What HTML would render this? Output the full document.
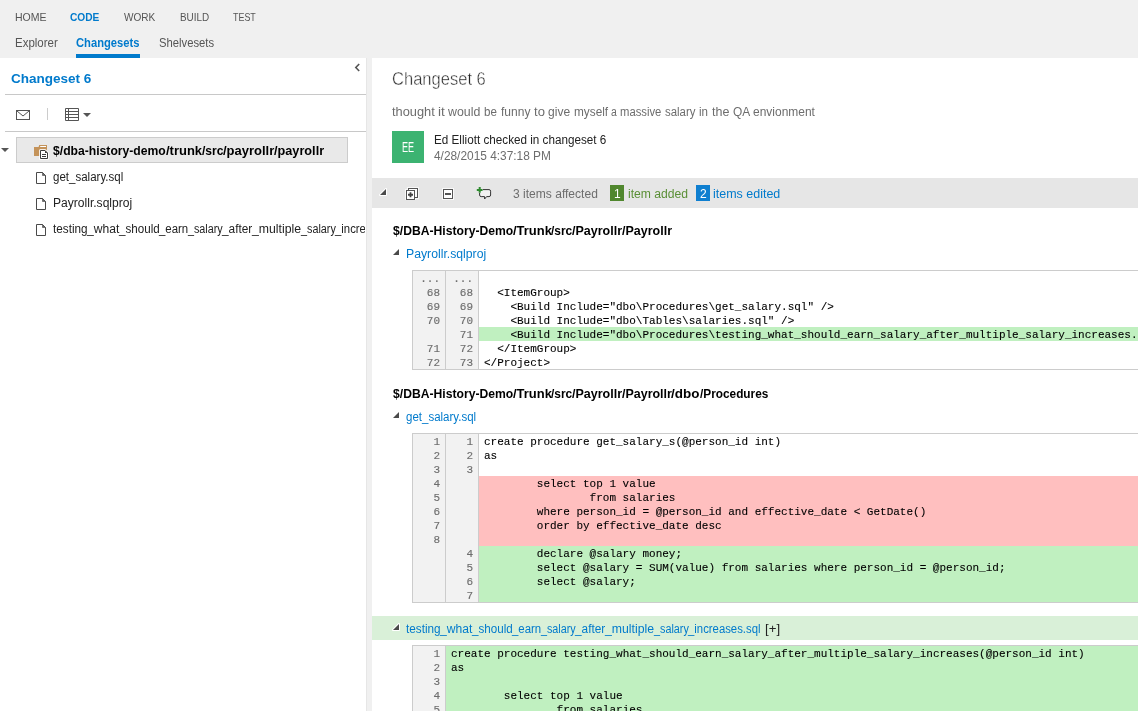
<!DOCTYPE html>
<html lang="en">
<head>
<meta charset="utf-8">
<title>Changeset 6</title>
<style>
html,body{margin:0;padding:0;}
body{width:1138px;height:711px;overflow:hidden;position:relative;background:#fff;
  font-family:"Liberation Sans",sans-serif;font-size:12px;color:#222;}
.a{position:absolute;white-space:nowrap;line-height:1;}
#hdr,#left,#right{will-change:transform;}
#hdr{position:absolute;left:0;top:0;width:1138px;height:58px;background:#f0f0f0;}
#left{position:absolute;left:0;top:58px;width:366px;height:653px;background:#fff;overflow:hidden;}
#split{position:absolute;left:366px;top:58px;width:6px;height:653px;background:#f0f0f0;border-left:1px solid #e6e6e6;box-sizing:border-box;}
#right{position:absolute;left:372px;top:58px;width:766px;height:653px;background:#fff;overflow:hidden;}
.nav{font-size:11.5px;color:#555;}
.nav2{font-size:13px;color:#555;}
.blue{color:#007acc;}
.b{font-weight:bold;}
.hr{position:absolute;height:1px;background:#c8c8c8;}
/* code blocks */
.code{position:absolute;left:40px;border:1px solid #ccc;border-right:0;width:800px;
  font-family:"Liberation Mono",monospace;font-size:11px;line-height:14px;color:#000;background:#fff;}
.row{height:14px;display:flex;white-space:pre;line-height:16px;}
.g{background:#f2f2f2;border-right:1px solid #ccc;text-align:right;padding-right:5px;box-sizing:border-box;width:33px;color:#6e6e6e;-webkit-text-stroke:0.15px #6e6e6e;flex:none;}
.c{padding-left:5px;flex:1;-webkit-text-stroke:0.1px #000;}
.add .c{background:#c0f0c0;}
.del .c{background:#ffbfbf;}
</style>
</head>
<body>
<div id="hdr">
  <span class="a nav" id="n1" style="left:15.4px;top:12px;transform:scaleX(0.915);transform-origin:0 0;">HOME</span>
  <span class="a nav b blue" id="n2" style="left:70.4px;top:12px;transform:scaleX(0.885);transform-origin:0 0;">CODE</span>
  <span class="a nav" id="n3" style="left:123.8px;top:12px;transform:scaleX(0.875);transform-origin:0 0;">WORK</span>
  <span class="a nav" id="n4" style="left:179.6px;top:12px;transform:scaleX(0.862);transform-origin:0 0;">BUILD</span>
  <span class="a nav" id="n5" style="left:233.0px;top:12px;transform:scaleX(0.776);transform-origin:0 0;">TEST</span>
  <span class="a nav2" id="s1" style="left:15.4px;top:36px;transform:scaleX(0.883);transform-origin:0 0;">Explorer</span>
  <span class="a nav2 b blue" id="s2" style="left:76.3px;top:36px;transform:scaleX(0.861);transform-origin:0 0;">Changesets</span>
  <span class="a nav2" id="s3" style="left:158.5px;top:36px;transform:scaleX(0.865);transform-origin:0 0;">Shelvesets</span>
  <div style="position:absolute;left:76px;top:54px;width:64px;height:4px;background:#007acc;"></div>
</div>

<div id="left">
  <span class="a b blue" id="l1" style="left:11.3px;top:13.5px;font-size:13px;transform:scaleX(1.04);transform-origin:0 0;">Changeset 6</span>
  <svg class="a" style="left:354px;top:5px;" width="7" height="9" viewBox="0 0 7 9"><path d="M5.2 1 L1.8 4.5 L5.2 8" fill="none" stroke="#555" stroke-width="1.6"/></svg>
  <div class="hr" style="left:5px;top:36px;width:361px;"></div>
  <!-- toolbar -->
  <svg class="a" style="left:16px;top:52px;" width="14" height="10" viewBox="0 0 14 10"><rect x="0.5" y="0.5" width="13" height="9" fill="none" stroke="#555"/><path d="M1 1 L7 6 L13 1" fill="none" stroke="#555"/></svg>
  <div class="a" style="left:47px;top:50px;width:1px;height:12px;background:#ccc;"></div>
  <svg class="a" style="left:65px;top:50px;" width="14" height="13" viewBox="0 0 14 13"><path d="M0.5 0.5H13.5V12.5H0.5Z M0.5 3.5H13.5 M0.5 6.5H13.5 M0.5 9.5H13.5 M3.5 0.5V12.5" fill="none" stroke="#555"/></svg>
  <svg class="a" style="left:83px;top:55px;" width="8" height="4" viewBox="0 0 8 4"><path d="M0 0H8L4 4Z" fill="#555"/></svg>
  <div class="hr" style="left:5px;top:73px;width:361px;"></div>
  <!-- tree -->
  <svg class="a" style="left:1px;top:90px;" width="8" height="4" viewBox="0 0 8 4"><path d="M0 0H8L4 4Z" fill="#555"/></svg>
  <div class="a" style="left:16px;top:79px;width:332px;height:26px;box-sizing:border-box;border:1px solid #ccc;background:#e9e9e9;"></div>
  <svg class="a" style="left:33px;top:86px;" width="17" height="17" viewBox="0 0 17 17">
    <path d="M1 3H5.6L6.2 1H14V12H1Z" fill="#c4935a"/><path d="M7.2 2.5H13" stroke="#fff" stroke-width="1"/>
    <path d="M7.5 6.5H12L14.5 9V14.5H7.5Z" fill="#fff" stroke="#fff" stroke-width="3" stroke-linejoin="round" opacity=".85"/>
    <path d="M7.5 6.5H12L14.5 9V14.5H7.5Z" fill="#fff" stroke="#3c3c3c"/><path d="M12 6.5V9H14.5Z" fill="#3c3c3c"/>
    <path d="M9 10.5H13 M9 12.5H13" stroke="#3c3c3c"/>
  </svg>
  <span id="t0"><span class="a " style="left:53.3px;top:87px;font-size:12px;color:#000;font-weight:bold;transform:scaleX(1.013);transform-origin:0 0;">$/dba-history-demo</span><span class="a " style="left:165.8px;top:87px;font-size:12px;color:#000;font-weight:bold;transform:scaleX(1.080);transform-origin:0 0;">/trunk</span><span class="a " style="left:201.5px;top:87px;font-size:12px;color:#000;font-weight:bold;transform:scaleX(1.002);transform-origin:0 0;">/src</span><span class="a " style="left:222.6px;top:87px;font-size:12px;color:#000;font-weight:bold;transform:scaleX(1.083);transform-origin:0 0;">/payrollr</span><span class="a " style="left:273.6px;top:87px;font-size:12px;color:#000;font-weight:bold;transform:scaleX(1.058);transform-origin:0 0;">/payrollr</span></span><!--/t0-->
  <svg class="a" style="left:36px;top:114px;" width="10" height="12" viewBox="0 0 10 12"><path d="M0.5 0.5H6.5L9.5 3.5V11.5H0.5Z" fill="#fff" stroke="#4a4a4a"/><path d="M6.5 0.5V3.5H9.5Z" fill="#666" stroke="#4a4a4a" stroke-width=".6"/></svg>
  <span id="t1"><span class="a " style="left:53.2px;top:113px;font-size:12px;color:#222;transform:scaleX(0.960);transform-origin:0 0;">get_salary.sql</span></span><!--/t1-->
  <svg class="a" style="left:36px;top:140px;" width="10" height="12" viewBox="0 0 10 12"><path d="M0.5 0.5H6.5L9.5 3.5V11.5H0.5Z" fill="#fff" stroke="#4a4a4a"/><path d="M6.5 0.5V3.5H9.5Z" fill="#666" stroke="#4a4a4a" stroke-width=".6"/></svg>
  <span id="t2"><span class="a " style="left:53.2px;top:139px;font-size:12px;color:#222;transform:scaleX(1.006);transform-origin:0 0;">Payrollr.sqlproj</span></span><!--/t2-->
  <svg class="a" style="left:36px;top:166px;" width="10" height="12" viewBox="0 0 10 12"><path d="M0.5 0.5H6.5L9.5 3.5V11.5H0.5Z" fill="#fff" stroke="#4a4a4a"/><path d="M6.5 0.5V3.5H9.5Z" fill="#666" stroke="#4a4a4a" stroke-width=".6"/></svg>
  <div class="a" style="left:0;top:0;width:365px;height:300px;overflow:hidden;"><span id="t3"><span class="a " style="left:53.2px;top:165px;font-size:12px;color:#222;transform:scaleX(0.979);transform-origin:0 0;">testing</span><span class="a " style="left:87.3px;top:165px;font-size:12px;color:#222;transform:scaleX(1.008);transform-origin:0 0;">_what</span><span class="a " style="left:119.1px;top:165px;font-size:12px;color:#222;transform:scaleX(0.968);transform-origin:0 0;">_should</span><span class="a " style="left:159.3px;top:165px;font-size:12px;color:#222;transform:scaleX(0.951);transform-origin:0 0;">_earn</span><span class="a " style="left:188.0px;top:165px;font-size:12px;color:#222;transform:scaleX(0.897);transform-origin:0 0;">_salary</span><span class="a " style="left:222.2px;top:165px;font-size:12px;color:#222;transform:scaleX(0.987);transform-origin:0 0;">_after</span><span class="a " style="left:252.0px;top:165px;font-size:12px;color:#222;transform:scaleX(1.022);transform-origin:0 0;">_multiple</span><span class="a " style="left:300.6px;top:165px;font-size:12px;color:#222;transform:scaleX(0.900);transform-origin:0 0;">_salary</span><span class="a " style="left:334.9px;top:165px;font-size:12px;color:#222;transform:scaleX(0.945);transform-origin:0 0;">_increases.sql</span></span><!--/t3--></div>
</div>
<div id="split"></div>

<div id="right">
  <span class="a" id="r1" style="left:20.2px;top:12px;font-size:18px;color:#262626;transform:scaleX(0.919);transform-origin:0 0;-webkit-text-stroke:0.45px #fff;">Changeset 6</span>
  <span id="r2"><span class="a " style="left:19.8px;top:48px;font-size:12px;color:#6d6d6d;transform:scaleX(1.069);transform-origin:0 0;">thought </span><span class="a " style="left:66.1px;top:48px;font-size:12px;color:#6d6d6d;transform:scaleX(1.133);transform-origin:0 0;">it </span><span class="a " style="left:76.4px;top:48px;font-size:12px;color:#6d6d6d;transform:scaleX(1.030);transform-origin:0 0;">would </span><span class="a " style="left:112.2px;top:48px;font-size:12px;color:#6d6d6d;transform:scaleX(0.966);transform-origin:0 0;">be </span><span class="a " style="left:128.6px;top:48px;font-size:12px;color:#6d6d6d;transform:scaleX(1.001);transform-origin:0 0;">funny </span><span class="a " style="left:161.5px;top:48px;font-size:12px;color:#6d6d6d;transform:scaleX(1.088);transform-origin:0 0;">to </span><span class="a " style="left:175.9px;top:48px;font-size:12px;color:#6d6d6d;transform:scaleX(1.004);transform-origin:0 0;">give </span><span class="a " style="left:201.5px;top:48px;font-size:12px;color:#6d6d6d;transform:scaleX(0.984);transform-origin:0 0;">myself </span><span class="a " style="left:239.1px;top:48px;font-size:12px;color:#6d6d6d;transform:scaleX(0.867);transform-origin:0 0;">a </span><span class="a " style="left:248.4px;top:48px;font-size:12px;color:#6d6d6d;transform:scaleX(0.938);transform-origin:0 0;">massive </span><span class="a " style="left:293.2px;top:48px;font-size:12px;color:#6d6d6d;transform:scaleX(0.950);transform-origin:0 0;">salary </span><span class="a " style="left:327.1px;top:48px;font-size:12px;color:#6d6d6d;transform:scaleX(0.963);transform-origin:0 0;">in </span><span class="a " style="left:339.6px;top:48px;font-size:12px;color:#6d6d6d;transform:scaleX(1.043);transform-origin:0 0;">the </span><span class="a " style="left:360.5px;top:48px;font-size:12px;color:#6d6d6d;transform:scaleX(0.992);transform-origin:0 0;">QA </span><span class="a " style="left:381.2px;top:48px;font-size:12px;color:#6d6d6d;transform:scaleX(0.998);transform-origin:0 0;">envionment </span></span><!--/r2-->
  <div class="a" style="left:20px;top:73px;width:32px;height:32px;background:#3cb371;"></div>
  <span class="a" id="av" style="left:30.3px;top:82px;font-size:14px;color:#fff;transform:scaleX(0.65);transform-origin:0 0;">EE</span>
  <span class="a" id="r3" style="left:62.2px;top:76px;font-size:12px;color:#222;transform:scaleX(0.975);transform-origin:0 0;">Ed Elliott checked in changeset 6</span>
  <span class="a" id="r4" style="left:62.0px;top:92px;font-size:12px;color:#6d6d6d;transform:scaleX(0.990);transform-origin:0 0;">4/28/2015 4:37:18 PM</span>

  <div class="a" style="left:0;top:120px;width:766px;height:30px;background:#e6e6e6;"></div>
  <svg class="a" style="left:6px;top:129px;" width="10" height="10" viewBox="0 0 10 10"><path d="M8 2V8H2Z" fill="#fff" stroke="#fff" stroke-width="2" stroke-linejoin="round"/><path d="M8 2V8H2Z" fill="#4a4a4a"/></svg>
  <svg class="a" style="left:33px;top:129px;" width="14" height="13" viewBox="0 0 14 13"><g fill="none" stroke="#fff" stroke-width="3" opacity=".75"><rect x="3.5" y="1.5" width="9" height="9"/><rect x="1.5" y="3.5" width="8" height="9"/></g><rect x="3.5" y="1.5" width="9" height="9" fill="#fff" stroke="#555"/><rect x="1.5" y="3.5" width="8" height="9" fill="#fff" stroke="#555"/><path d="M3 7.75H8 M5.5 5.25V10.25" stroke="#444" stroke-width="1.8"/></svg>
  <svg class="a" style="left:70px;top:130px;" width="12" height="12" viewBox="0 0 12 12"><rect x="1.5" y="1.5" width="9" height="9" fill="none" stroke="#fff" stroke-width="3" opacity=".75"/><rect x="1.5" y="1.5" width="9" height="9" fill="#fff" stroke="#555"/><path d="M3 6H9" stroke="#555" stroke-width="2"/></svg>
  <svg class="a" style="left:104px;top:128px;" width="16" height="15" viewBox="0 0 16 15"><path d="M7 3.6H13Q14.6 3.6 14.6 5.2V9Q14.6 10.6 13 10.6H10.6L8.6 13V10.6H5.2Q3.6 10.6 3.6 9V7" fill="#f2f2f2" stroke="#333" stroke-width="1"/><path d="M0.8 3.9H6.6 M3.7 1V6.8" stroke="#2e8b2e" stroke-width="2"/></svg>
  <span class="a" id="r5" style="left:140.9px;top:130px;font-size:12px;color:#6d6d6d;transform:scaleX(1.004);transform-origin:0 0;">3 items affected</span>
  <div class="a" style="left:238px;top:127px;width:14px;height:16px;background:#50872e;"></div>
  <span class="a" id="b1" style="left:242px;top:130px;font-size:12px;color:#fff;">1</span>
  <span class="a" id="r6" style="left:255.5px;top:130px;font-size:12px;color:#5a8f36;transform:scaleX(1.012);transform-origin:0 0;">item added</span>
  <div class="a" style="left:324px;top:127px;width:14px;height:16px;background:#0f7fd0;"></div>
  <span class="a" id="b2" style="left:328px;top:130px;font-size:12px;color:#fff;">2</span>
  <span class="a" id="r7" style="left:340.6px;top:130px;font-size:12px;color:#007acc;transform:scaleX(1.040);transform-origin:0 0;">items edited</span>

  <span id="p1"><span class="a " style="left:20.6px;top:167px;font-size:12px;color:#000;font-weight:bold;transform:scaleX(1.013);transform-origin:0 0;">$/DBA-History-Demo</span><span class="a " style="left:140.5px;top:167px;font-size:12px;color:#000;font-weight:bold;transform:scaleX(1.080);transform-origin:0 0;">/Trunk</span><span class="a " style="left:179.1px;top:167px;font-size:12px;color:#000;font-weight:bold;transform:scaleX(0.993);transform-origin:0 0;">/src</span><span class="a " style="left:200.0px;top:167px;font-size:12px;color:#000;font-weight:bold;transform:scaleX(1.043);transform-origin:0 0;">/Payrollr</span><span class="a " style="left:249.8px;top:167px;font-size:12px;color:#000;font-weight:bold;transform:scaleX(1.041);transform-origin:0 0;">/Payrollr</span></span><!--/p1-->
  <svg class="a" style="left:19px;top:189px;" width="10" height="10" viewBox="0 0 10 10"><path d="M8 2V8H2Z" fill="#fff" stroke="#fff" stroke-width="2" stroke-linejoin="round"/><path d="M8 2V8H2Z" fill="#4a4a4a"/></svg>
  <span class="a blue" id="f1" style="left:33.6px;top:190px;font-size:12px;transform:scaleX(1.019);transform-origin:0 0;">Payrollr.sqlproj</span>

  <div class="code" style="top:212px;">
    <div class="row"><span class="g">...</span><span class="g">...</span><span class="c"></span></div>
    <div class="row"><span class="g">68</span><span class="g">68</span><span class="c">  &lt;ItemGroup&gt;</span></div>
    <div class="row"><span class="g">69</span><span class="g">69</span><span class="c">    &lt;Build Include="dbo\Procedures\get_salary.sql" /&gt;</span></div>
    <div class="row"><span class="g">70</span><span class="g">70</span><span class="c">    &lt;Build Include="dbo\Tables\salaries.sql" /&gt;</span></div>
    <div class="row add"><span class="g"></span><span class="g">71</span><span class="c">    &lt;Build Include="dbo\Procedures\testing_what_should_earn_salary_after_multiple_salary_increases.sql" /&gt;</span></div>
    <div class="row"><span class="g">71</span><span class="g">72</span><span class="c">  &lt;/ItemGroup&gt;</span></div>
    <div class="row"><span class="g">72</span><span class="g">73</span><span class="c">&lt;/Project&gt;</span></div>
  </div>

  <span id="p2"><span class="a " style="left:20.6px;top:330px;font-size:12px;color:#000;font-weight:bold;transform:scaleX(1.013);transform-origin:0 0;">$/DBA-History-Demo</span><span class="a " style="left:140.5px;top:330px;font-size:12px;color:#000;font-weight:bold;transform:scaleX(1.080);transform-origin:0 0;">/Trunk</span><span class="a " style="left:179.1px;top:330px;font-size:12px;color:#000;font-weight:bold;transform:scaleX(0.993);transform-origin:0 0;">/src</span><span class="a " style="left:200.0px;top:330px;font-size:12px;color:#000;font-weight:bold;transform:scaleX(1.043);transform-origin:0 0;">/Payrollr</span><span class="a " style="left:249.8px;top:330px;font-size:12px;color:#000;font-weight:bold;transform:scaleX(1.039);transform-origin:0 0;">/Payrollr</span><span class="a " style="left:299.4px;top:330px;font-size:12px;color:#000;font-weight:bold;transform:scaleX(1.121);transform-origin:0 0;">/dbo</span><span class="a " style="left:327.5px;top:330px;font-size:12px;color:#000;font-weight:bold;transform:scaleX(0.985);transform-origin:0 0;">/Procedures</span></span><!--/p2-->
  <svg class="a" style="left:19px;top:352px;" width="10" height="10" viewBox="0 0 10 10"><path d="M8 2V8H2Z" fill="#fff" stroke="#fff" stroke-width="2" stroke-linejoin="round"/><path d="M8 2V8H2Z" fill="#4a4a4a"/></svg>
  <span class="a blue" id="f2" style="left:34.1px;top:353px;font-size:12px;transform:scaleX(0.959);transform-origin:0 0;">get_salary.sql</span>

  <div class="code" style="top:375px;">
    <div class="row"><span class="g">1</span><span class="g">1</span><span class="c">create procedure get_salary_s(@person_id int)</span></div>
    <div class="row"><span class="g">2</span><span class="g">2</span><span class="c">as</span></div>
    <div class="row"><span class="g">3</span><span class="g">3</span><span class="c"></span></div>
    <div class="row del"><span class="g">4</span><span class="g"></span><span class="c">        select top 1 value</span></div>
    <div class="row del"><span class="g">5</span><span class="g"></span><span class="c">                from salaries</span></div>
    <div class="row del"><span class="g">6</span><span class="g"></span><span class="c">        where person_id = @person_id and effective_date &lt; GetDate()</span></div>
    <div class="row del"><span class="g">7</span><span class="g"></span><span class="c">        order by effective_date desc</span></div>
    <div class="row del"><span class="g">8</span><span class="g"></span><span class="c"></span></div>
    <div class="row add"><span class="g"></span><span class="g">4</span><span class="c">        declare @salary money;</span></div>
    <div class="row add"><span class="g"></span><span class="g">5</span><span class="c">        select @salary = SUM(value) from salaries where person_id = @person_id;</span></div>
    <div class="row add"><span class="g"></span><span class="g">6</span><span class="c">        select @salary;</span></div>
    <div class="row add"><span class="g"></span><span class="g">7</span><span class="c"></span></div>
  </div>

  <div class="a" style="left:0;top:558px;width:766px;height:24px;background:#d9f0d8;"></div>
  <svg class="a" style="left:19px;top:564px;" width="10" height="10" viewBox="0 0 10 10"><path d="M8 2V8H2Z" fill="#fff" stroke="#fff" stroke-width="2" stroke-linejoin="round"/><path d="M8 2V8H2Z" fill="#4a4a4a"/></svg>
  <span id="f3"><span class="a " style="left:34.3px;top:565px;font-size:12px;color:#007acc;transform:scaleX(0.979);transform-origin:0 0;">testing</span><span class="a " style="left:68.4px;top:565px;font-size:12px;color:#007acc;transform:scaleX(1.008);transform-origin:0 0;">_what</span><span class="a " style="left:100.2px;top:565px;font-size:12px;color:#007acc;transform:scaleX(0.968);transform-origin:0 0;">_should</span><span class="a " style="left:140.4px;top:565px;font-size:12px;color:#007acc;transform:scaleX(0.951);transform-origin:0 0;">_earn</span><span class="a " style="left:169.1px;top:565px;font-size:12px;color:#007acc;transform:scaleX(0.897);transform-origin:0 0;">_salary</span><span class="a " style="left:203.3px;top:565px;font-size:12px;color:#007acc;transform:scaleX(0.987);transform-origin:0 0;">_after</span><span class="a " style="left:233.1px;top:565px;font-size:12px;color:#007acc;transform:scaleX(1.022);transform-origin:0 0;">_multiple</span><span class="a " style="left:281.7px;top:565px;font-size:12px;color:#007acc;transform:scaleX(0.900);transform-origin:0 0;">_salary</span><span class="a " style="left:316.0px;top:565px;font-size:12px;color:#007acc;transform:scaleX(0.945);transform-origin:0 0;">_increases.sql</span></span><!--/f3-->
  <span class="a" id="f3b" style="left:392.5px;top:565px;font-size:12px;color:#222;transform:scaleX(1.1);transform-origin:0 0;">[+]</span>

  <div class="code" style="top:587px;">
    <div class="row add"><span class="g">1</span><span class="c">create procedure testing_what_should_earn_salary_after_multiple_salary_increases(@person_id int)</span></div>
    <div class="row add"><span class="g">2</span><span class="c">as</span></div>
    <div class="row add"><span class="g">3</span><span class="c"></span></div>
    <div class="row add"><span class="g">4</span><span class="c">        select top 1 value</span></div>
    <div class="row add"><span class="g">5</span><span class="c">                from salaries</span></div>
    <div class="row add"><span class="g">6</span><span class="c">        where person_id = @person_id and effective_date &lt; GetDate()</span></div>
  </div>
</div>
</body>
</html>
